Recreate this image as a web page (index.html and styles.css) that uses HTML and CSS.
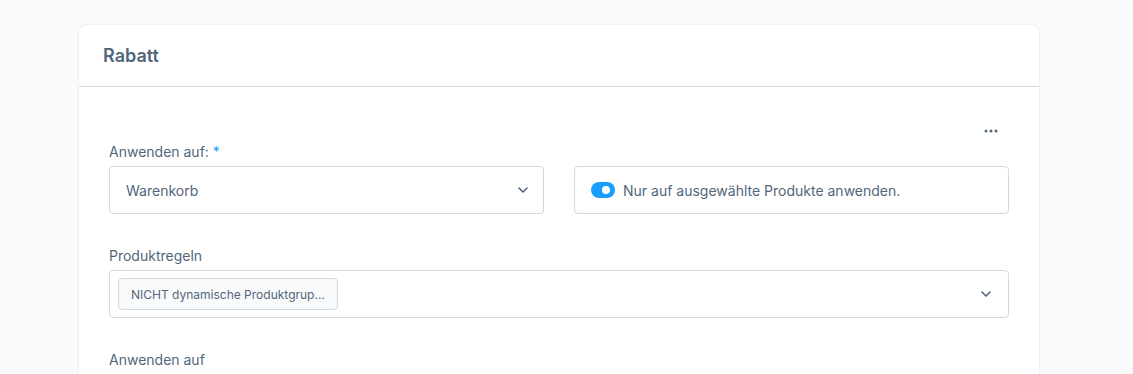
FILE: index.html
```html
<!DOCTYPE html>
<html lang="de">
<head>
    <meta charset="UTF-8">
    <title>Rabatt</title>
    <link rel="stylesheet" href="styles.css">
</head>
<body>
<div class="page">
    <div class="card">
        <div class="card-header">
            <h2 class="card-title">Rabatt</h2>
        </div>
        <div class="card-body">
            <div class="context-row">
                <button class="context-button" aria-label="Mehr">
                    <svg width="14" height="4" viewBox="0 0 14 4"><circle cx="2" cy="2" r="1.5"/><circle cx="7" cy="2" r="1.5"/><circle cx="12" cy="2" r="1.5"/></svg>
                </button>
            </div>
            <div class="field-grid">
                <div class="field">
                    <label class="field-label">Anwenden auf: <span class="required">*</span></label>
                    <div class="select">
                        <span class="select-value">Warenkorb</span>
                        <svg class="chevron" width="10" height="6" viewBox="0 0 10 6"><path d="M1 1l4 4 4-4"/></svg>
                    </div>
                </div>
                <div class="field">
                    <div class="switch-box">
                        <span class="switch"><span class="switch-knob"></span></span>
                        <span class="switch-label">Nur auf ausgewählte Produkte anwenden.</span>
                    </div>
                </div>
            </div>
            <div class="field">
                <label class="field-label">Produktregeln</label>
                <div class="select select-multi">
                    <span class="tag">NICHT dynamische Produktgrup...</span>
                    <svg class="chevron" width="10" height="6" viewBox="0 0 10 6"><path d="M1 1l4 4 4-4"/></svg>
                </div>
            </div>
            <div class="field">
                <label class="field-label">Anwenden auf</label>
            </div>
        </div>
    </div>
</div>
</body>
</html>
```

FILE: styles.css
```css
* {
    box-sizing: border-box;
    margin: 0;
    padding: 0;
}

body {
    font-family: Inter, "Noto Sans", sans-serif;
    background-color: #f9fafb;
    color: #52667a;
    font-size: 14px;
}

.page {
    padding: 25px 0 0 79px;
}

.card {
    width: 960px;
    background-color: #fff;
    border-radius: 8px 8px 0 0;
    box-shadow: 0 0 0 1px #eef0f3, 0 2px 4px rgba(0, 0, 0, 0.04);
}

.card-header {
    height: 62px;
    padding: 0 24px;
    display: flex;
    align-items: center;
    border-bottom: 1px solid #d1d9e0;
}

.card-title {
    font-size: 18px;
    font-weight: 600;
    color: #52667a;
}

.card-body {
    padding: 29px 30px 0;
    min-height: 340px;
}

.context-row {
    display: flex;
    justify-content: flex-end;
    height: 26px;
    padding-right: 10px;
}

.context-button {
    border: none;
    background: none;
    width: 16px;
    height: 30px;
    display: flex;
    align-items: center;
    justify-content: center;
    cursor: pointer;
}

.context-button svg {
    fill: #52667a;
}

.field-grid {
    display: grid;
    grid-template-columns: 1fr 1fr;
    column-gap: 30px;
    align-items: end;
}

.field {
    margin-bottom: 32px;
}

.field-label {
    display: block;
    line-height: 20px;
    margin-bottom: 4px;
}

.required {
    color: #189eff;
}

.select {
    height: 48px;
    border: 1px solid #d1d9e0;
    border-radius: 4px;
    display: flex;
    align-items: center;
    justify-content: space-between;
    padding: 0 15px 0 16px;
}

.select-value {
    color: #52667a;
}

.chevron {
    fill: none;
    stroke: #52667a;
    stroke-width: 1.6;
    stroke-linecap: round;
    stroke-linejoin: round;
}

.select-multi {
    padding: 0 17px 0 8px;
}

.tag {
    display: inline-flex;
    align-items: center;
    height: 32px;
    padding: 0 12px;
    font-size: 12px;
    background-color: #f9fafb;
    border: 1px solid #d1d9e0;
    border-radius: 4px;
    color: #52667a;
}

.switch-box {
    height: 48px;
    border: 1px solid #d1d9e0;
    border-radius: 4px;
    display: flex;
    align-items: center;
    gap: 8px;
    padding: 0 16px;
}

.switch {
    width: 24px;
    height: 16px;
    border-radius: 8px;
    background-color: #189eff;
    position: relative;
}

.switch-knob {
    position: absolute;
    top: 4px;
    right: 5px;
    width: 8px;
    height: 8px;
    border-radius: 50%;
    background-color: #fff;
}

.switch-label {
    color: #52667a;
}
```
